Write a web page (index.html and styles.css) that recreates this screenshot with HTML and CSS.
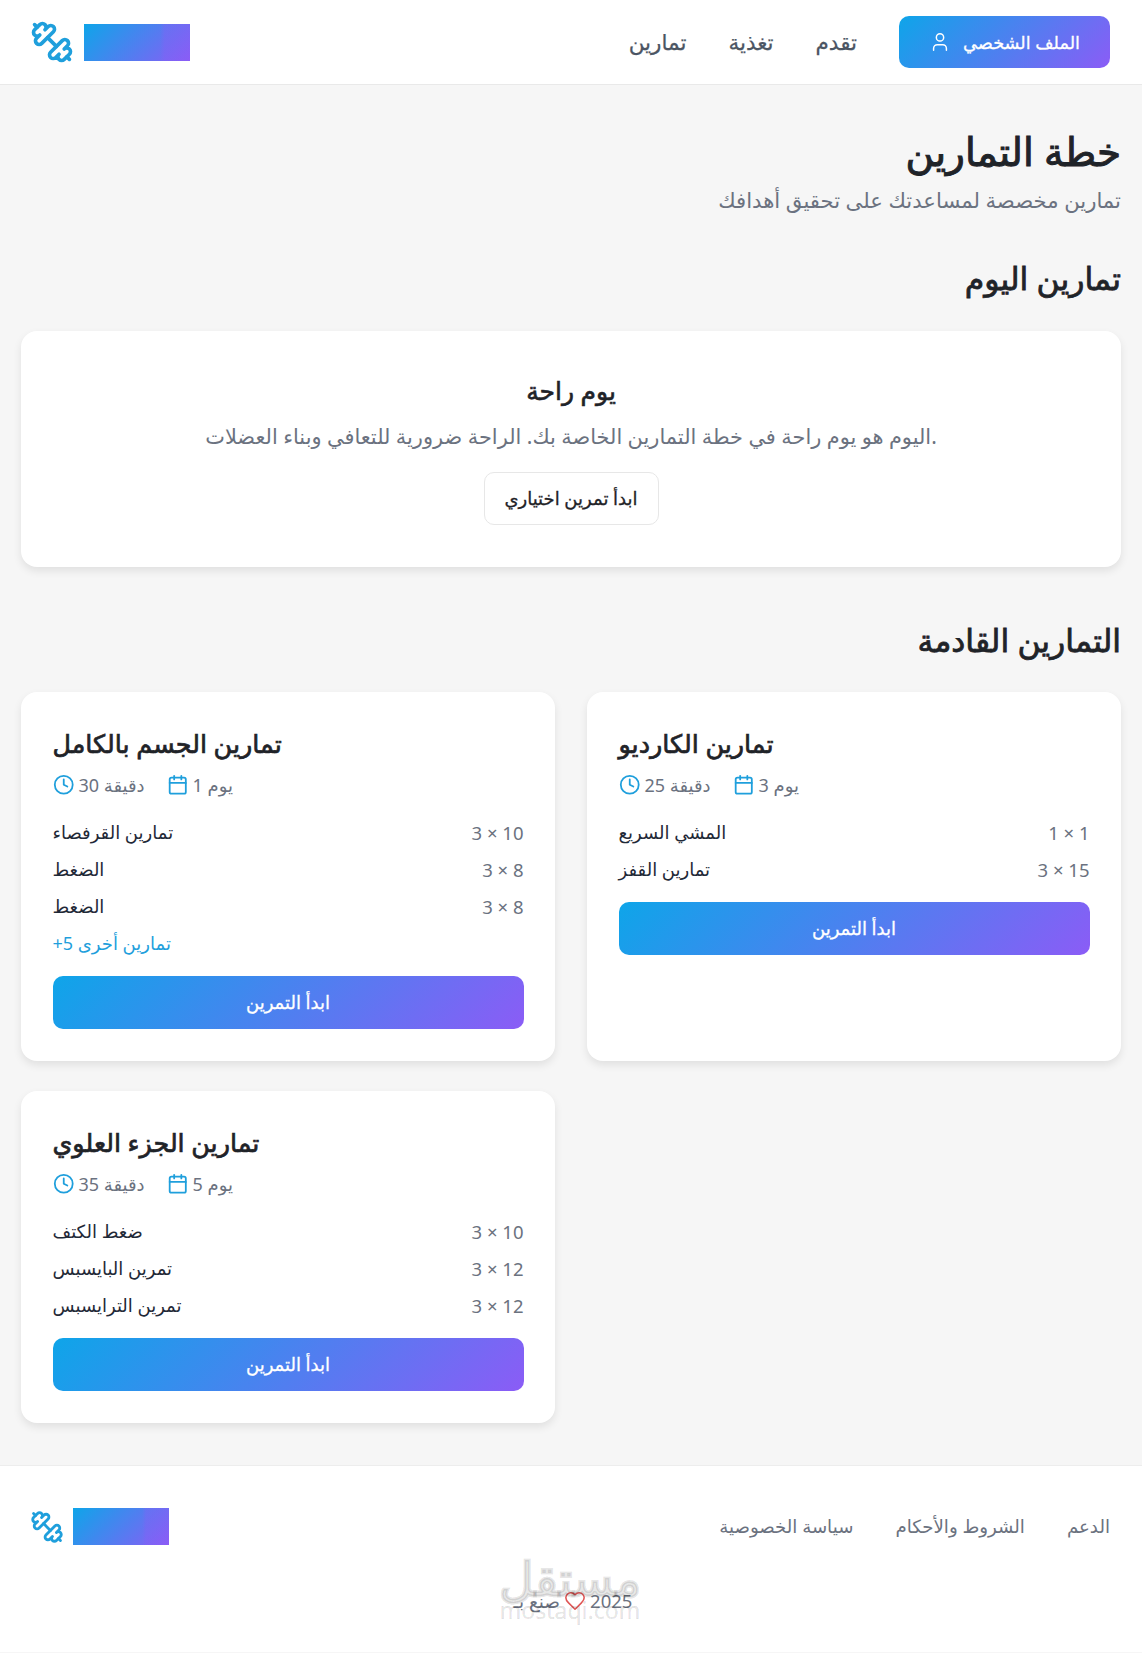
FILE: index.html
```html
<!DOCTYPE html>
<html lang="ar">
<head>
<meta charset="utf-8">
<title>خطة التمارين</title>
<link rel="stylesheet" href="styles.css">
</head>
<body>
<svg class="defs" width="0" height="0" aria-hidden="true">
  <symbol id="i-dumbbell" viewBox="0 0 24 24"><path d="M14.4 14.4 9.6 9.6"/><path d="M18.657 21.485a2 2 0 1 1-2.829-2.828l-1.767 1.768a2 2 0 1 1-2.829-2.829l6.364-6.364a2 2 0 1 1 2.829 2.829l-1.768 1.767a2 2 0 1 1 2.828 2.829z"/><path d="m21.5 21.5-1.4-1.4"/><path d="M3.9 3.9 2.5 2.5"/><path d="M6.404 12.768a2 2 0 1 1-2.829-2.829l1.768-1.767a2 2 0 1 1-2.828-2.829l2.828-2.828a2 2 0 1 1 2.829 2.828l1.767-1.768a2 2 0 1 1 2.829 2.829z"/></symbol>
  <symbol id="i-user" viewBox="0 0 24 24"><path d="M19 21v-2a4 4 0 0 0-4-4H9a4 4 0 0 0-4 4v2"/><circle cx="12" cy="7" r="4"/></symbol>
  <symbol id="i-clock" viewBox="0 0 24 24"><circle cx="12" cy="12" r="10"/><polyline points="12 6 12 12 16 14"/></symbol>
  <symbol id="i-cal" viewBox="0 0 24 24"><path d="M8 2v4"/><path d="M16 2v4"/><rect width="18" height="18" x="3" y="4" rx="2"/><path d="M3 10h18"/></symbol>
  <symbol id="i-heart" viewBox="0 0 24 24"><path d="M19 14c1.49-1.46 3-3.21 3-5.5A5.5 5.5 0 0 0 16.5 3c-1.76 0-3 .5-4.5 2-1.5-1.5-2.74-2-4.500-2A5.500 5.500 0 0 0 2 8.500c0 2.300 1.500 4.050 3 5.500l7 7Z"/></symbol>
</svg>

<header class="topbar">
  <a class="logo" href="#">
    <svg class="ico logo-icon"><use href="#i-dumbbell"/></svg>
    <span class="logo-block"></span>
  </a>
  <nav class="topnav">
    <a href="#">تمارين</a>
    <a href="#">تغذية</a>
    <a href="#">تقدم</a>
    <a class="btn-grad btn-profile" href="#"><svg class="ico ico-user"><use href="#i-user"/></svg><span>الملف الشخصي</span></a>
  </nav>
</header>

<main class="page">
  <div class="page-head">
    <h1>خطة التمارين</h1>
    <p>تمارين مخصصة لمساعدتك على تحقيق أهدافك</p>
  </div>

  <section class="section">
    <h2>تمارين اليوم</h2>
    <div class="card rest">
      <h3>يوم راحة</h3>
      <p>اليوم هو يوم راحة في خطة التمارين الخاصة بك. الراحة ضرورية للتعافي وبناء العضلات.</p>
      <a class="btn-outline" href="#">ابدأ تمرين اختياري</a>
    </div>
  </section>

  <section class="section upcoming">
    <h2>التمارين القادمة</h2>
    <div class="grid">
      <article class="card workout">
        <h3>تمارين الجسم بالكامل</h3>
        <div class="meta">
          <span><svg class="ico"><use href="#i-clock"/></svg>30 دقيقة</span>
          <span><svg class="ico"><use href="#i-cal"/></svg>1 يوم</span>
        </div>
        <ul class="rows">
          <li><span>تمارين القرفصاء</span><span class="reps">3 × 10</span></li>
          <li><span>الضغط</span><span class="reps">3 × 8</span></li>
          <li><span>الضغط</span><span class="reps">3 × 8</span></li>
        </ul>
        <div class="more">+5 تمارين أخرى</div>
        <a class="btn-grad btn-start" href="#">ابدأ التمرين</a>
      </article>
      <article class="card workout">
        <h3>تمارين الكارديو</h3>
        <div class="meta">
          <span><svg class="ico"><use href="#i-clock"/></svg>25 دقيقة</span>
          <span><svg class="ico"><use href="#i-cal"/></svg>3 يوم</span>
        </div>
        <ul class="rows">
          <li><span>المشي السريع</span><span class="reps">1 × 1</span></li>
          <li><span>تمارين القفز</span><span class="reps">3 × 15</span></li>
        </ul>
        <a class="btn-grad btn-start" href="#">ابدأ التمرين</a>
      </article>
      <article class="card workout">
        <h3>تمارين الجزء العلوي</h3>
        <div class="meta">
          <span><svg class="ico"><use href="#i-clock"/></svg>35 دقيقة</span>
          <span><svg class="ico"><use href="#i-cal"/></svg>5 يوم</span>
        </div>
        <ul class="rows">
          <li><span>ضغط الكتف</span><span class="reps">3 × 10</span></li>
          <li><span>تمرين البايسبس</span><span class="reps">3 × 12</span></li>
          <li><span>تمرين الترايسبس</span><span class="reps">3 × 12</span></li>
        </ul>
        <a class="btn-grad btn-start" href="#">ابدأ التمرين</a>
      </article>
    </div>
  </section>
</main>

<footer class="footer">
  <div class="foot-row">
    <a class="logo logo-small" href="#">
      <svg class="ico logo-icon"><use href="#i-dumbbell"/></svg>
      <span class="logo-block"></span>
    </a>
    <nav class="footnav">
      <a href="#">سياسة الخصوصية</a>
      <a href="#">الشروط والأحكام</a>
      <a href="#">الدعم</a>
    </nav>
  </div>
  <div class="copy"><span>2025</span><svg class="ico ico-heart"><use href="#i-heart"/></svg><span>صنع بـ</span></div>
  <div class="watermark"><b>مستقل</b><span>mostaqi.com</span></div>
</footer>
</body>
</html>
```
FILE: styles.css
```css
* { box-sizing: border-box; }
html, body { margin: 0; padding: 0; }
body {
  background: #f6f6f6;
  color: #1f2328;
  font-family: "Noto Sans", "Open Sans", "DejaVu Sans", sans-serif;
  font-size: 18px;
  line-height: 1.5;
}
a { color: inherit; text-decoration: none; }
h1, h2, h3, p, ul { margin: 0; padding: 0; font-weight: 400; }
ul { list-style: none; }
.defs { position: absolute; }
.ico {
  width: 20px;
  height: 20px;
  fill: none;
  stroke: currentColor;
  stroke-width: 2;
  stroke-linecap: round;
  stroke-linejoin: round;
  flex: none;
}

.topbar {
  height: 85px;
  background: #fff;
  border-bottom: 1px solid #e9e9e9;
  padding: 0 32px;
  display: flex;
  align-items: center;
  justify-content: space-between;
}
.logo { display: flex; align-items: center; gap: 10px; }
.logo-icon { width: 44px; height: 44px; color: #1f9fdc; margin-left: -2px; }
.logo-block {
  display: block;
  width: 106px;
  height: 37px;
  background:
    linear-gradient(90deg, rgba(139,92,246,0) 72%, rgba(139,92,246,.3) 76%, rgba(139,92,246,.3) 100%),
    linear-gradient(135deg, #0ea5e9, #8b5cf6);
}
.topnav { display: flex; align-items: center; gap: 42px; color: #4b5563; font-size: 21.5px; -webkit-text-stroke: .25px #4b5563; }
.btn-grad {
  background: linear-gradient(135deg, #0ea5e9, #8b5cf6);
  color: #fff;
  border-radius: 10px;
  display: flex;
  align-items: center;
  justify-content: center;
  -webkit-text-stroke: .3px #fff;
}
.btn-profile { width: 211px; height: 52px; gap: 12px; font-size: 17.7px; }
.ico-user { width: 22px; height: 22px; stroke-width: 1.6; }

.page { padding: 39px 21px 42px; }
.page-head { text-align: right; margin-bottom: 38px; }
.page-head h1 { font-size: 39px; line-height: 54px; -webkit-text-stroke: 1px #1f2328; }
.page-head p { font-size: 21.2px; color: #6b7280; line-height: 36px; margin-top: 4px; }
.section h2 { font-size: 31.5px; text-align: right; line-height: 44px; margin-bottom: 30.5px; -webkit-text-stroke: .8px #1f2328; }
.upcoming { margin-top: 51px; }

.card {
  background: #fff;
  border-radius: 16px;
  box-shadow: 0 4px 8px rgba(0,0,0,.09);
}
.rest {
  display: flex;
  flex-direction: column;
  align-items: center;
  padding: 43px 32px 42px;
  height: 236px;
}
.rest h3 { font-size: 25px; line-height: 32px; -webkit-text-stroke: .6px #1f2328; }
.rest p { font-size: 20.9px; color: #6b7280; margin-top: 15px; line-height: 31px; }
.btn-outline {
  margin-top: 20px;
  width: 175px;
  height: 53px;
  border: 1px solid #e7e7e7;
  border-radius: 10px;
  display: flex;
  align-items: center;
  justify-content: center;
  font-size: 18px;
  -webkit-text-stroke: .3px #1f2328;
}

.grid { display: grid; grid-template-columns: 1fr 1fr; gap: 30px 32px; align-items: stretch; }
.workout { padding: 32px 31.5px; }
.workout h3 { font-size: 25.4px; line-height: 38px; -webkit-text-stroke: .7px #1f2328; }
.meta { display: flex; gap: 22px; margin-top: 9px; color: #6b7280; font-size: 18px; line-height: 28px; }
.meta span { display: flex; align-items: center; gap: 4.5px; }
.meta .ico { color: #1f9fdc; width: 21.5px; height: 21.5px; }
.rows { margin-top: 15px; }
.rows li { display: flex; justify-content: space-between; height: 37px; align-items: center; font-size: 18px; color: #1f2937; }
.reps { color: #6b7280; font-size: 18.5px; }
.more { color: #1f9fdc; height: 37px; display: flex; align-items: center; font-size: 18px; }
.btn-start { height: 53px; margin-top: 14px; font-size: 18px; }

.footer {
  position: relative;
  background: #fff;
  border-top: 1px solid #ededed;
  height: 187px;
  padding: 42px 32px 0;
}
.foot-row { display: flex; align-items: center; justify-content: space-between; }
.logo-small { gap: 9px; }
.logo-small .logo-icon { width: 34px; height: 34px; }
.logo-small .logo-block { width: 96px; }
.footnav { display: flex; gap: 42px; color: #6b7280; font-size: 18.2px; }
.copy {
  direction: rtl;
  display: flex;
  justify-content: center;
  align-items: center;
  gap: 4px;
  margin-top: 42px;
  padding-left: 4px;
  color: #6b7280;
  font-size: 18.5px;
}
.ico-heart { color: #e05555; width: 22px; height: 22px; stroke-width: 1.7; }
.watermark {
  position: absolute;
  left: 501px;
  top: 84px;
  width: 138px;
  text-align: center;
  color: rgba(0,0,0,.1);
  pointer-events: none;
  display: flex;
  flex-direction: column;
  align-items: center;
}
.watermark b { font-size: 47.5px; line-height: 56px; font-weight: 400; -webkit-text-stroke: 3px rgba(0,0,0,.1); }
.watermark span { font-size: 23px; line-height: 24px; margin-top: -8px; -webkit-text-stroke: .4px rgba(0,0,0,.1); }
```
